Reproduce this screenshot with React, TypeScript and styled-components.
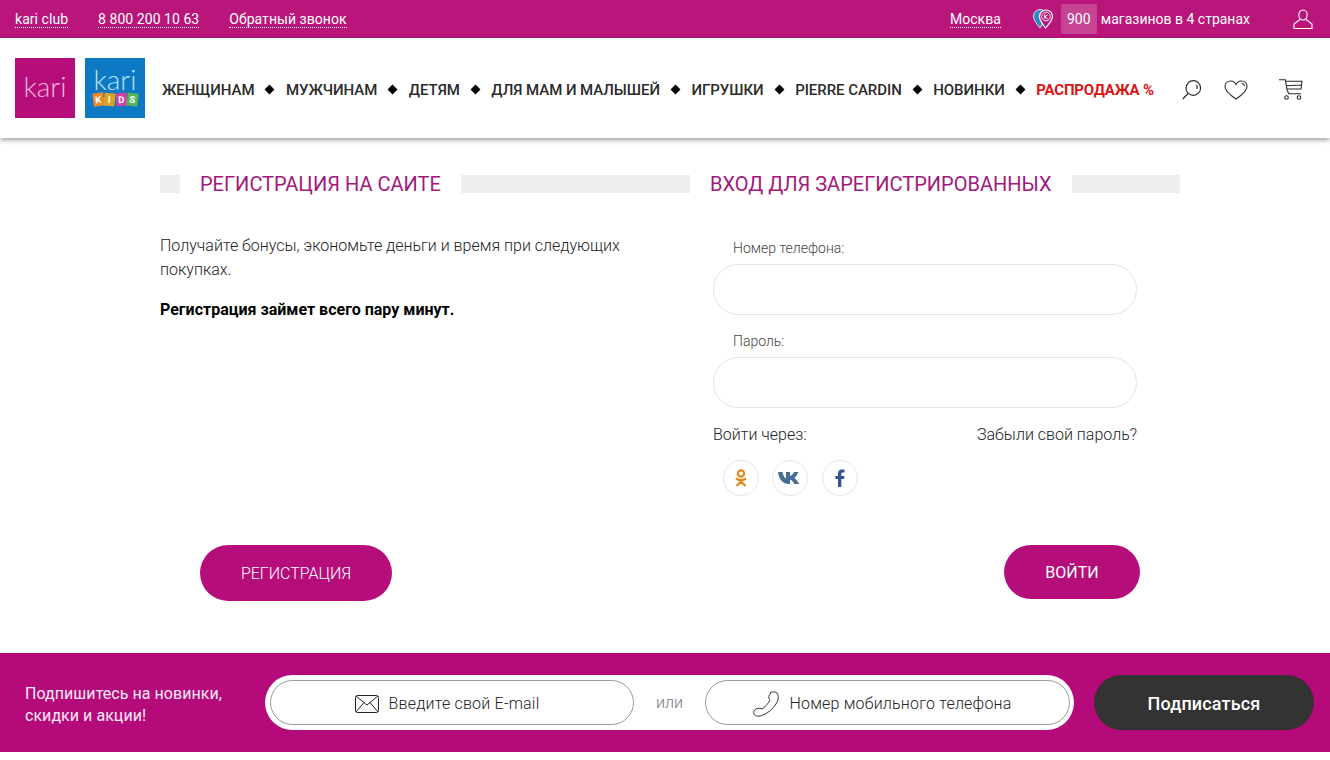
import React from "react";
import styled, { createGlobalStyle } from "styled-components";

const Global = createGlobalStyle`
  html, body { margin: 0; padding: 0; background: #fff; }
  body { font-family: Roboto, "Liberation Sans", sans-serif; color: #222; }
  * { box-sizing: border-box; }
`;

const Page = styled.div`
  width: 1330px;
  height: 760px;
  overflow: hidden;
  background: #fff;
`;

/* top strip */
const TopBar = styled.div`
  height: 38px;
  background: #b9157a;
  display: flex;
  align-items: center;
  padding: 0 17px 0 15px;
  color: #fff;
  font-size: 14px;
`;
const TopLinks = styled.div`
  display: flex;
  gap: 30px;
  flex: 1;
  letter-spacing: 0.05px;
`;
const Dotted = styled.a`
  color: #fff;
  line-height: 16px;
  padding-top: 1px;
  border-bottom: 1px dotted #fff;
`;
const Stores = styled.div`
  display: flex;
  align-items: center;
  margin-left: 32px;
`;
const StoreCount = styled.span`
  width: 36px;
  height: 30px;
  margin: 0 4px 0 8px;
  display: flex;
  align-items: center;
  justify-content: center;
  background: rgba(255, 255, 255, 0.2);
  border-radius: 2px;
`;
const UserBtn = styled.div`
  margin-left: 43px;
  display: flex;
`;

/* logo + nav */
const Header = styled.header`
  height: 100px;
  background: #fff;
  display: flex;
  align-items: center;
  padding: 0 27px 0 15px;
  box-shadow: 0 2px 5px rgba(0, 0, 0, 0.38);
  position: relative;
`;
const Logo = styled.div<{ $bg: string }>`
  width: 60px;
  height: 60px;
  background: ${(p) => p.$bg};
  margin-right: 10px;
  padding-bottom: 3px;
  display: flex;
  flex-direction: column;
  align-items: center;
  justify-content: center;
  font-family: Lato, Roboto, sans-serif;
`;
const LogoWord = styled.span<{ $color: string }>`
  font-size: 28px;
  line-height: 25px;
  color: ${(p) => p.$color};
  font-weight: 300;
`;
const Blocks = styled.div`
  display: flex;
  gap: 1px;
  margin-top: 1px;
`;
const Block = styled.span<{ $bg: string; $tilt: number }>`
  width: 10.5px;
  height: 13px;
  background: ${(p) => p.$bg};
  color: #fff;
  font: 700 9.500px/13px Roboto, sans-serif;
  text-align: center;
  transform: rotate(${(p) => p.$tilt}deg);
`;
const Nav = styled.nav`
  display: flex;
  align-items: center;
  margin-left: 7px;
  padding-top: 3px;
  flex: 1;
`;
const NavItem = styled.a<{ $sale?: boolean }>`
  font-size: 15px;
  letter-spacing: ${(p) => (p.$sale ? "-0.2px" : "-0.05px")};
  color: ${(p) => (p.$sale ? "#dd1414" : "#2b2b2b")};
  font-weight: ${(p) => (p.$sale ? 700 : 500)};
  white-space: nowrap;
`;
const Diamond = styled.span`
  width: 7px;
  height: 7px;
  margin: 0 12.500px 0 12px;
  background: #000;
  transform: rotate(45deg);
  flex: none;
`;
const HeaderIcons = styled.div`
  display: flex;
  align-items: center;
  padding-top: 3px;
`;
const HeaderIcon = styled.span<{ $gap: number }>`
  display: flex;
  margin-left: ${(p) => p.$gap}px;
`;

/* forms */
const Main = styled.main`
  height: 515px;
  padding: 37px 150px 0 160px;
  display: grid;
  grid-template-columns: 530px 470px;
  grid-template-rows: 370px auto;
  column-gap: 20px;
`;
const Column = styled.section``;
const TitleRow = styled.div`
  display: flex;
  align-items: center;
  gap: 20px;
  height: 18px;
`;
const TitleBar = styled.span<{ $w?: number }>`
  height: 18px;
  background: #ededed;
  ${(p) => (p.$w ? `width: ${p.$w}px; flex: none;` : "flex: 1;")}
`;
const Title = styled.h2`
  margin: 0;
  font-size: 20px;
  font-weight: 400;
  color: #a3187b;
  white-space: nowrap;
`;
const Lead = styled.p`
  margin: 41px 40px 0 0;
  font-size: 16px;
  line-height: 24px;
  font-weight: 300;
  color: #222;
`;
const Strong = styled.p`
  margin: 16px 0 0;
  font-size: 16px;
  line-height: 24px;
  font-weight: 700;
  color: #000;
`;
const Form = styled.div`
  width: 424px;
  margin: 47px 0 0 3px;
`;
const Label = styled.label`
  display: block;
  padding-left: 20px;
  font-size: 14px;
  font-weight: 300;
  line-height: 17px;
  color: #444;
  margin-bottom: 7px;
`;
const Input = styled.input`
  display: block;
  width: 100%;
  height: 51px;
  border: 1px solid #e3e3e3;
  border-radius: 26px;
  margin-bottom: 18px;
  background: #fff;
  outline: none;
`;
const LinksRow = styled.div`
  display: flex;
  justify-content: space-between;
  margin-top: -1px;
  font-size: 16px;
  font-weight: 300;
  line-height: 20px;
  color: #222;
`;
const Socials = styled.div`
  display: flex;
  gap: 13.300px;
  margin: 15px 0 0 10px;
`;
const Social = styled.a`
  width: 36px;
  height: 36px;
  border: 1px solid #e6e6e6;
  border-radius: 50%;
  display: flex;
  align-items: center;
  justify-content: center;
`;
const ActionLeft = styled.div`
  padding-left: 40px;
`;
const ActionRight = styled.div`
  display: flex;
  justify-content: flex-end;
  padding-right: 40px;
`;
const PillButton = styled.button<{ $w: number; $h: number; $weight: number }>`
  width: ${(p) => p.$w}px;
  height: ${(p) => p.$h}px;
  border: none;
  border-radius: 28px;
  background: #b50e7b;
  color: #fff;
  font-family: Roboto, sans-serif;
  font-size: 16px;
  font-weight: ${(p) => p.$weight};
`;

/* subscribe strip */
const Subscribe = styled.div`
  height: 99px;
  background: #b50b7a;
  display: flex;
  align-items: center;
  padding: 0 16px 0 25px;
`;
const SubText = styled.div`
  width: 240px;
  color: #fdeaf6;
  font-size: 16px;
  line-height: 22px;
  font-weight: 400;
  letter-spacing: 0.05px;
  padding-top: 4px;
`;
const SubForm = styled.div`
  width: 809px;
  height: 55px;
  background: #fff;
  border-radius: 28px;
  padding: 5px 4px 5px 5px;
  display: flex;
  align-items: center;
`;
const SubField = styled.div<{ $w: number }>`
  width: ${(p) => p.$w}px;
  height: 45px;
  border: 1px solid #9b9b9b;
  border-radius: 23px;
  padding: 2px 10px 0 0;
  display: flex;
  align-items: center;
  justify-content: center;
  gap: 10px;
  font-size: 16px;
  letter-spacing: 0.2px;
  font-weight: 300;
  color: #222;
`;
const Or = styled.span`
  flex: 1;
  text-align: center;
  font-size: 16px;
  font-weight: 300;
  color: #777;
`;
const SubButton = styled.button`
  width: 220px;
  height: 55px;
  margin-left: 20px;
  padding-top: 2px;
  border: none;
  border-radius: 28px;
  background: #333;
  color: #fff;
  font-family: Roboto, sans-serif;
  font-size: 18px;
  font-weight: 500;
  letter-spacing: 0.15px;
`;

const navItems = ["ЖЕНЩИНАМ", "МУЖЧИНАМ", "ДЕТЯМ", "ДЛЯ МАМ И МАЛЫШЕЙ", "ИГРУШКИ", "PIERRE CARDIN", "НОВИНКИ"];
const kids: [string, string, number][] = [
  ["K", "#ee8a2c", -8],
  ["I", "#d9a423", 6],
  ["D", "#d340a2", -5],
  ["S", "#58b65a", 7],
];

function App() {
  return (
    <Page>
      <Global />
      <TopBar>
        <TopLinks>
          <Dotted>kari club</Dotted>
          <Dotted>8 800 200 10 63</Dotted>
          <Dotted>Обратный звонок</Dotted>
        </TopLinks>
        <Dotted>Москва</Dotted>
        <Stores>
          <svg width="20" height="20" viewBox="0 0 20 20">
            <path d="M7 19C3 14 .5 11 .5 7A6.500 6.500 0 0 1 7 .5c2 0 3.500.8 4.500 2C8 4 6 10 9.500 15z" fill="#2a8ac8" stroke="#fff" strokeWidth=".8" />
            <path d="M12.500 19C9 14.500 6.500 11 6.500 7.500A6.200 6.200 0 0 1 19.500 7.500C19.500 11 16.500 14.500 12.500 19z" fill="#b9157a" stroke="#fff" strokeWidth="1.200" />
            <circle cx="13" cy="7.500" r="4.300" fill="none" stroke="#fff" strokeWidth=".9" />
            <path d="M11.800 5v5M14.800 5.800l-3 2 3 2.200" fill="none" stroke="#fff" strokeWidth="1" />
          </svg>
          <StoreCount>900</StoreCount>
          <span>магазинов в 4 странах</span>
        </Stores>
        <UserBtn>
          <svg width="20" height="20" viewBox="0 0 20 20" fill="none" stroke="#fff" strokeWidth="1.100">
            <ellipse cx="10" cy="6" rx="4.200" ry="5" />
            <path d="M7 10.500 1 15v4.500h18V15l-6-4.500" />
          </svg>
        </UserBtn>
      </TopBar>

      <Header>
        <Logo $bg="#b50e7b">
          <LogoWord $color="#f7b5dc">kari</LogoWord>
        </Logo>
        <Logo $bg="#0d79c5">
          <LogoWord $color="#b5e3f5">kari</LogoWord>
          <Blocks>
            {kids.map(([letter, color, tilt]) => (
              <Block key={letter} $bg={color} $tilt={tilt}>{letter}</Block>
            ))}
          </Blocks>
        </Logo>
        <Nav>
          {navItems.map((item) => (
            <React.Fragment key={item}>
              <NavItem>{item}</NavItem>
              <Diamond />
            </React.Fragment>
          ))}
          <NavItem $sale>РАСПРОДАЖА %</NavItem>
        </Nav>
        <HeaderIcons>
          <HeaderIcon $gap={0}>
            <svg width="20" height="20" viewBox="0 0 20 20" fill="none" stroke="#2b2b2b" strokeWidth="1.200">
              <circle cx="11.300" cy="8" r="7.300" />
              <path d="M6 13.500 .8 19M14.500 5c.8 1.200.9 2.600.4 4" />
            </svg>
          </HeaderIcon>
          <HeaderIcon $gap={22}>
            <svg width="24" height="20" viewBox="0 0 24 20" fill="none" stroke="#2b2b2b" strokeWidth="1.100">
              <path d="M12 19C6 15 1 11 1 6.500 1 3 3.500 1 6.500 1 9 1 11 2.300 12 4.500 13 2.300 15 1 17.500 1 20.500 1 23 3 23 6.500 23 11 18 15 12 19z" />
              <path d="M17.500 3.500c1.500 0 2.800 1 3 2.500" />
            </svg>
          </HeaderIcon>
          <HeaderIcon $gap={31}>
            <svg width="24" height="22" viewBox="0 0 24 22" fill="none" stroke="#2b2b2b" strokeWidth="1.100">
              <path d="M0 .7h6.300L8 10.700l1.700 4H22" />
              <path d="M6.500 2.300H23l-1 7.700H8M7 6.700 22.500 6" />
              <circle cx="7.500" cy="18.500" r="1.800" />
              <circle cx="20" cy="18.500" r="1.800" />
            </svg>
          </HeaderIcon>
        </HeaderIcons>
      </Header>

      <Main>
        <Column>
          <TitleRow>
            <TitleBar $w={20} />
            <Title>РЕГИСТРАЦИЯ НА САИТЕ</Title>
            <TitleBar />
          </TitleRow>
          <Lead>Получайте бонусы, экономьте деньги и время при следующих покупках.</Lead>
          <Strong>Регистрация займет всего пару минут.</Strong>
        </Column>
        <Column>
          <TitleRow>
            <Title>ВХОД ДЛЯ ЗАРЕГИСТРИРОВАННЫХ</Title>
            <TitleBar />
          </TitleRow>
          <Form>
            <Label>Номер телефона:</Label>
            <Input />
            <Label>Пароль:</Label>
            <Input />
            <LinksRow>
              <span>Войти через:</span>
              <span>Забыли свой пароль?</span>
            </LinksRow>
            <Socials>
              <Social>
                <svg width="12" height="18" viewBox="0 0 12 18" fill="none" stroke="#e08a1e" strokeWidth="2.200">
                  <circle cx="6" cy="4.500" r="3.200" />
                  <path d="M1 9.500c3 2 7 2 10 0M6 11.500v1M1.500 17 6 12.500 10.500 17" />
                </svg>
              </Social>
              <Social>
                <svg width="24" height="14" viewBox="0 0 24 14">
                  <path d="M0 1h4.500c.5 3 2 6 3.500 6.500V1h4v4c1.500-.3 3-2 4-4h4.300c-.7 2.500-2.500 5-4 6 1.800 1 3.600 3.500 4.700 6h-4.600c-1-2.300-2.600-4-4.400-4.300V13h-1.500C5.500 13 1 9 0 1z" fill="#456c93" />
                </svg>
              </Social>
              <Social>
                <svg width="10" height="18" viewBox="0 0 10 18">
                  <path d="M3 18V10H.5V7H3V4.500C3 1.800 4.500.5 7 .5h2.500v3H8c-1.300 0-1.700.5-1.700 1.500v2h3.200l-.5 3H6.300v8z" fill="#34528f" />
                </svg>
              </Social>
            </Socials>
          </Form>
        </Column>
        <ActionLeft>
          <PillButton $w={192} $h={56} $weight={300}>РЕГИСТРАЦИЯ</PillButton>
        </ActionLeft>
        <ActionRight>
          <PillButton $w={136} $h={54} $weight={400}>ВОЙТИ</PillButton>
        </ActionRight>
      </Main>

      <Subscribe>
        <SubText>Подпишитесь на новинки,<br />скидки и акции!</SubText>
        <SubForm>
          <SubField $w={364}>
            <svg width="24" height="18" viewBox="0 0 24 18" fill="none" stroke="#222" strokeWidth="1">
              <rect x=".5" y=".5" width="23" height="17" rx="2" />
              <path d="M1 1l11 9 11-9M1 17l8-9.500M23 17l-8-9.500" />
            </svg>
            Введите свой E-mail
          </SubField>
          <Or>или</Or>
          <SubField $w={365}>
            <svg width="26" height="26" viewBox="0 0 26 26" fill="none" stroke="#333" strokeWidth="1">
              <path d="M17 2c2-1.500 5-1.500 7 0 2 2.500 1.500 7-1 11C20 18 15 22 10 24c-4 1.800-8 1.500-9-1-.8-2 0-4 2-5 2-1 5-1 6 0 3-2 6-5 8-9-2-1.500-1.500-5 1-7z" />
            </svg>
            Номер мобильного телефона
          </SubField>
        </SubForm>
        <SubButton>Подписаться</SubButton>
      </Subscribe>
    </Page>
  );
}
export default App;
